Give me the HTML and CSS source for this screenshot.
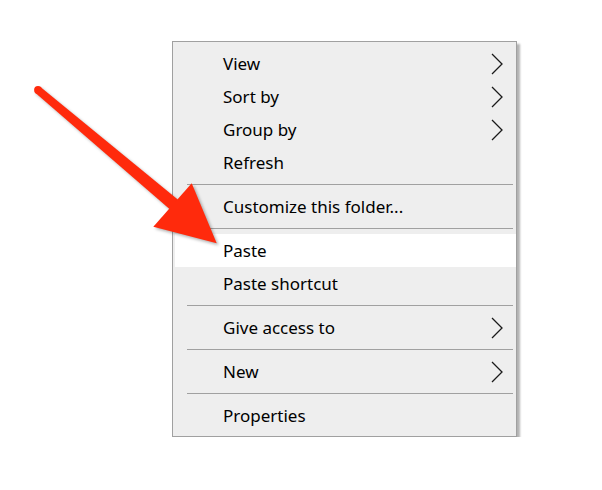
FILE: index.html
```html
<!DOCTYPE html>
<html lang="en">
<head>
    <meta charset="UTF-8">
    <meta name="viewport" content="width=device-width, initial-scale=1.0">
    <title>Context menu</title>
    <link rel="stylesheet" href="styles.css">
</head>
<body>

<div class="menu">
    <div class="item"><span>View</span><svg class="chevron" viewBox="0 0 12 22"><polyline points="1,1 11,11 1,21"/></svg></div>
    <div class="item"><span>Sort by</span><svg class="chevron" viewBox="0 0 12 22"><polyline points="1,1 11,11 1,21"/></svg></div>
    <div class="item"><span>Group by</span><svg class="chevron" viewBox="0 0 12 22"><polyline points="1,1 11,11 1,21"/></svg></div>
    <div class="item"><span>Refresh</span></div>
    <div class="sep"></div>
    <div class="item"><span>Customize this folder...</span></div>
    <div class="sep"></div>
    <div class="item active"><span>Paste</span></div>
    <div class="item"><span>Paste shortcut</span></div>
    <div class="sep"></div>
    <div class="item"><span>Give access to</span><svg class="chevron" viewBox="0 0 12 22"><polyline points="1,1 11,11 1,21"/></svg></div>
    <div class="sep"></div>
    <div class="item"><span>New</span><svg class="chevron" viewBox="0 0 12 22"><polyline points="1,1 11,11 1,21"/></svg></div>
    <div class="sep"></div>
    <div class="item"><span>Properties</span></div>
</div>

<!-- red pointer arrow drawn over the menu -->
<svg class="arrow" width="602" height="490" viewBox="0 0 602 490">
    <g class="arrow-shape">
        <circle cx="38" cy="90" r="3.9"/>
        <polygon points="35.5,92.9 40.5,87.1 180.2,201.4 172.1,211.2"/>
        <polygon points="191.7,183.3 153.3,226.7 216.7,243.3"/>
    </g>
</svg>

</body>
</html>
```

FILE: styles.css
```css
body {
    margin: 0;
    background: #ffffff;
    font-family: "Noto Sans", "Open Sans", sans-serif;
}

.menu {
    width: 341px;
    margin: 41px 0 0 172px;
    padding: 5px 0 4px 2px;
    background: #eeeeee;
    border: 1px solid #a0a0a0;
    box-shadow: 3px 3px 2px rgba(0, 0, 0, 0.3);
}

.item {
    display: flex;
    align-items: center;
    justify-content: space-between;
    height: 33px;
    padding: 0 13px 0 48px;
    font-size: 17px;
    color: #000000;
}

.item.active {
    background: #ffffff;
}

.chevron {
    width: 12px;
    height: 22px;
    fill: none;
    stroke: #1a1a1a;
    stroke-width: 1.3;
}

.sep {
    height: 1px;
    margin: 5px 3px 5px 12px;
    background: #a0a0a0;
}

.arrow {
    position: absolute;
    left: 0;
    top: 0;
    pointer-events: none;
}

.arrow-shape {
    fill: #ff2a0c;
    filter: drop-shadow(2px 2px 1.5px rgba(0, 0, 0, 0.3));
}
```
